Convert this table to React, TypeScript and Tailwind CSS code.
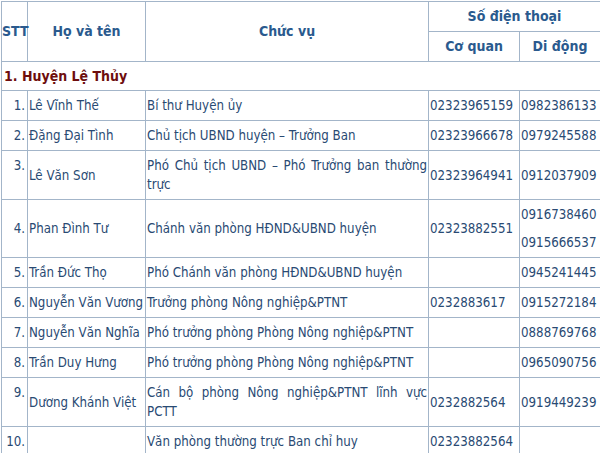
type Row = {
  stt: string;
  name: string;
  role: string;
  office: string;
  mobile: string[];
  tall?: boolean;
};

const rows: Row[] = [
  { stt: '1.', name: 'Lê Vĩnh Thế', role: 'Bí thư Huyện ủy', office: '02323965159', mobile: ['0982386133'] },
  { stt: '2.', name: 'Đặng Đại Tình', role: 'Chủ tịch UBND huyện – Trưởng Ban', office: '02323966678', mobile: ['0979245588'] },
  {
    stt: '3.',
    name: 'Lê Văn Sơn',
    role: 'Phó Chủ tịch UBND – Phó Trưởng ban thường trực',
    office: '02323964941',
    mobile: ['0912037909'],
    tall: true,
  },
  {
    stt: '4.',
    name: 'Phan Đình Tư',
    role: 'Chánh văn phòng HĐND&UBND huyện',
    office: '02323882551',
    mobile: ['0916738460', '0915666537'],
  },
  { stt: '5.', name: 'Trần Đức Thọ', role: 'Phó Chánh văn phòng HĐND&UBND huyện', office: '', mobile: ['0945241445'] },
  { stt: '6.', name: 'Nguyễn Văn Vương', role: 'Trưởng phòng Nông nghiệp&PTNT', office: '0232883617', mobile: ['0915272184'] },
  { stt: '7.', name: 'Nguyễn Văn Nghĩa', role: 'Phó trưởng phòng Phòng Nông nghiệp&PTNT', office: '', mobile: ['0888769768'] },
  { stt: '8.', name: 'Trần Duy Hưng', role: 'Phó trưởng phòng Phòng Nông nghiệp&PTNT', office: '', mobile: ['0965090756'] },
  {
    stt: '9.',
    name: 'Dương Khánh Việt',
    role: 'Cán bộ phòng Nông nghiệp&PTNT lĩnh vực PCTT',
    office: '0232882564',
    mobile: ['0919449239'],
    tall: true,
  },
  { stt: '10.', name: '', role: 'Văn phòng thường trực Ban chỉ huy', office: '02323882564', mobile: [] },
];

// shared cell look — thin steel-blue grid like the source page
const cell = 'border border-[#a3b5c9] px-px py-[5px] align-middle';
const head = 'border border-[#a3b5c9] h-[30px] p-0 text-center align-middle font-bold text-[14px] text-[#2a5a8e]';

export default function App() {
  return (
    <div
      className="w-[600px] overflow-hidden bg-white pl-px pt-px text-[13.2px] leading-[19px] text-[#294a73]"
      style={{ fontFamily: '"DejaVu Sans Condensed", Tahoma, "DejaVu Sans", sans-serif' }}
    >
      <table className="w-[620px] table-fixed border-collapse">
        <colgroup>
          <col className="w-[26px]" />
          <col className="w-[118px]" />
          <col className="w-[283px]" />
          <col className="w-[91px]" />
          <col />
        </colgroup>
        <thead>
          <tr>
            <th rowSpan={2} className={`${head} text-left`}>
              STT
            </th>
            <th rowSpan={2} className={head}>
              Họ và tên
            </th>
            <th rowSpan={2} className={head}>
              Chức vụ
            </th>
            <th colSpan={2} className={`${head} pr-[20px]`}>
              Số điện thoại
            </th>
          </tr>
          <tr>
            <th className={head}>Cơ quan</th>
            <th className={`${head} pr-[20px]`}>Di động</th>
          </tr>
        </thead>
        <tbody>
          <tr>
            <td
              colSpan={5}
              className="h-[29px] border border-[#a3b5c9] px-[2px] align-middle text-[14px] font-bold text-[#6e0d0d]"
            >
              1. Huyện Lệ Thủy
            </td>
          </tr>
          {rows.map((r) => (
            <tr key={r.stt}>
              <td className={`${cell} pr-[2px] text-right ${r.tall ? '!align-top' : ''}`}>{r.stt}</td>
              <td className={cell}>{r.name}</td>
              <td className={`${cell} text-justify`}>{r.role}</td>
              <td className={cell}>{r.office}</td>
              <td className={cell}>
                {r.mobile.map((m, i) => (
                  <p key={m} className={i > 0 ? 'mt-[9px]' : ''}>
                    {m}
                  </p>
                ))}
              </td>
            </tr>
          ))}
        </tbody>
      </table>
    </div>
  );
}
